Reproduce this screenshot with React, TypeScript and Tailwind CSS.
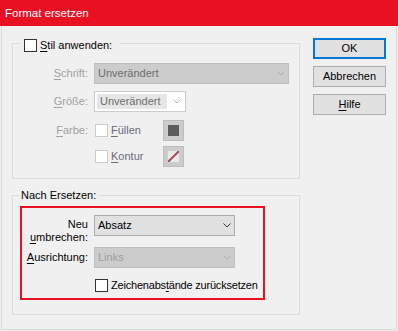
import React from "react";

const Chevron = ({ color }: { color: string }) => (
  <svg width="8" height="5" viewBox="0 0 8 5" className="shrink-0">
    <path d="M0.5 0.5 L4 4 L7.5 0.5" fill="none" stroke={color} strokeWidth="1" />
  </svg>
);

const U = ({ children }: { children: React.ReactNode }) => (
  <span className="underline underline-offset-[2px] decoration-[1px]">{children}</span>
);

const Box = ({ dim }: { dim?: boolean }) => (
  <span
    className={
      dim
        ? "block w-[13px] h-[13px] shrink-0 bg-white border border-[#cccccc]"
        : "block w-[13px] h-[13px] shrink-0 bg-white border border-[#333333]"
    }
  />
);

export default function App() {
  return (
    <div className="w-[398px] h-[331px] bg-[#f0f0f0] flex flex-col font-['Liberation_Sans',Arial,sans-serif] text-[11px] leading-[15px] text-black overflow-hidden whitespace-nowrap">
      <div className="h-[26px] shrink-0 bg-[#e81123] text-white text-[11.5px] flex items-center pl-[5px]">Format ersetzen</div>
      <div className="flex-1 mx-[1px] mb-[1px] border-x border-b border-[#dadada] flex">
        <div className="pl-[10px] flex flex-col">
          <fieldset className="mt-[11px] w-[288px] border border-[#dcdcdc] pt-[13px] pb-[11px]">
            <legend className="ml-[7px] pl-[4px] pr-[8px] h-[13px]">
              <div className="flex items-center gap-[3px] h-[13px] mt-[2px]">
                <Box />
                <span>
                  <U>S</U>til anwenden:
                </span>
              </div>
            </legend>
            <div className="flex items-center h-[21px]">
              <div className="w-[75px] text-right text-[#a0a0a0]">
                <U>S</U>chrift:
              </div>
              <div className="ml-[6px] w-[195px] h-[21px] bg-[#cccccc] border border-[#bfbfbf] flex items-center pl-[3px] pr-[3px]">
                <span className="flex-1 text-[#6d6d6d]">Unverändert</span>
                <Chevron color="#a8a8a8" />
              </div>
            </div>
            <div className="flex items-center h-[21px] mt-[7px]">
              <div className="w-[75px] text-right text-[#a0a0a0]">
                <U>G</U>röße:
              </div>
              <div className="ml-[6px] w-[92px] h-[21px] bg-white border border-[#cccccc] flex items-center pl-[2px] pr-[4px]">
                <span className="w-[70px] h-[15px] bg-[#e6e6e6] pl-[3px] text-[#6d6d6d] flex items-center">Unverändert</span>
                <span className="ml-auto flex">
                  <Chevron color="#b4b4b4" />
                </span>
              </div>
            </div>
            <div className="flex items-center h-[21px] mt-[8px]">
              <div className="w-[75px] text-right text-[#a0a0a0]">
                <U>F</U>arbe:
              </div>
              <div className="ml-[6px] w-[69px] flex items-center">
                <span className="ml-[1px]">
                  <Box dim />
                </span>
                <span className="ml-[3px] text-[#6a6a80]">
                  <U>F</U>üllen
                </span>
              </div>
              <div className="w-[21px] h-[21px] bg-[#cccccc] border border-[#bdbdbd] p-[4px]">
                <div className="w-full h-full bg-[#5c5c5c]" />
              </div>
            </div>
            <div className="flex items-center h-[21px] mt-[5px]">
              <div className="w-[75px]" />
              <div className="ml-[6px] w-[69px] flex items-center">
                <span className="ml-[1px]">
                  <Box dim />
                </span>
                <span className="ml-[3px] text-[#6a6a80]">
                  <U>K</U>ontur
                </span>
              </div>
              <div className="w-[21px] h-[21px] bg-[#cccccc] border border-[#bdbdbd] p-[4px]">
                <div className="w-full h-full bg-[#e9e9e9]">
                  <svg width="11" height="11" viewBox="0 0 11 11" className="block">
                    <path d="M0 11 L11 0" stroke="#a34e56" strokeWidth="2" />
                  </svg>
                </div>
              </div>
            </div>
          </fieldset>

          <fieldset className="mt-[10px] w-[288px] border border-[#dcdcdc] pt-[4px] pb-[14px]">
            <legend className="ml-[6px] pl-[2px] pr-[3px] h-[13px] leading-[13px]">Nach Ersetzen:</legend>
            <div className="ml-[7px] w-[245px] border-2 border-[#e81123] pt-[7px] pb-[6px]">
              <div className="flex items-start h-[21px]">
                <div className="w-[66px] text-right leading-[13px] mt-[3px]">
                  Neu
                  <br />
                  <U>u</U>mbrechen:
                </div>
                <div className="ml-[6px] w-[141px] h-[21px] bg-[#e1e1e1] border border-[#adadad] flex items-center pl-[3px] pr-[3px]">
                  <span className="flex-1">Absatz</span>
                  <Chevron color="#333333" />
                </div>
              </div>
              <div className="flex items-center h-[21px] mt-[11px]">
                <div className="w-[66px] text-right">
                  <U>A</U>usrichtung:
                </div>
                <div className="ml-[6px] w-[141px] h-[21px] bg-[#cccccc] border border-[#bfbfbf] flex items-center pl-[3px] pr-[3px]">
                  <span className="flex-1 text-[#9d9d9d]">Links</span>
                  <Chevron color="#b0b0b0" />
                </div>
              </div>
              <div className="flex items-center h-[13px] mt-[11px] ml-[73px]">
                <Box />
                <span className="ml-[3px] tracking-[-0.2px]">
                  Zeichenabs<U>t</U>ände zurücksetzen
                </span>
              </div>
            </div>
          </fieldset>
        </div>

        <div className="ml-[13px] mt-[12px] flex flex-col gap-[7px]">
          <div className="w-[73px] h-[21px] bg-[#e1e1e1] border-2 border-[#0078d7] flex items-center justify-center">OK</div>
          <div className="w-[73px] h-[21px] bg-[#e1e1e1] border border-[#adadad] flex items-center justify-center">Abbrechen</div>
          <div className="w-[73px] h-[21px] bg-[#e1e1e1] border border-[#adadad] flex items-center justify-center">
            <span>
              <U>H</U>ilfe
            </span>
          </div>
        </div>
      </div>
    </div>
  );
}
